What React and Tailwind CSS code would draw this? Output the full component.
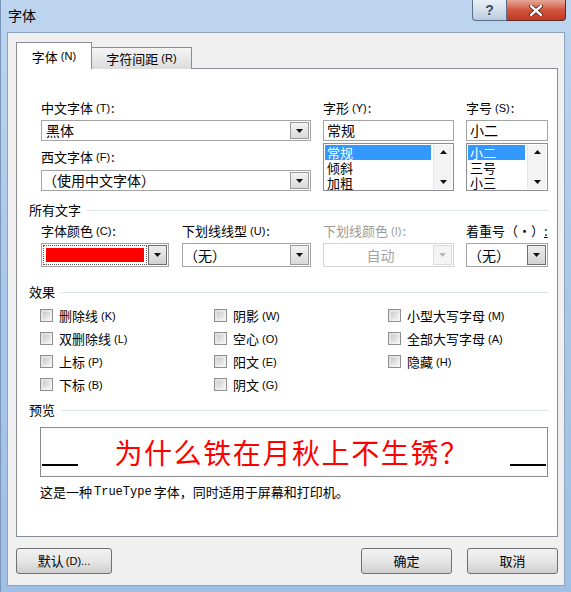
import React from "react";

const Tri = ({ up = false, disabled = false }) => (
    <svg width="7" height="4" viewBox="0 0 7 4">
        <path d={up ? "M0 4 L3.5 0 L7 4 Z" : "M0 0 L7 0 L3.5 4 Z"} fill={disabled ? "#b8b8b8" : "#111"} />
    </svg>
);

const DropBtn = ({ disabled = false, dark = false }) => (
    <div
        className={
            "w-[19px] flex items-center justify-center border " +
            (disabled
                ? "border-[#dcdcdc] bg-[#f4f4f4]"
                : dark
                ? "border-[#6e6e6e] bg-gradient-to-b from-[#ededed] to-[#d2d2d2]"
                : "border-[#9a9a9a] bg-gradient-to-b from-[#f3f3f3] to-[#d9d9d9]")
        }
    >
        <Tri disabled={disabled} />
    </div>
);

const Select = ({ value, h = "h-[21px]", center = false, disabled = false, dark = false, pl = "pl-[3px]" }) => (
    <div
        className={
            "flex bg-white border p-[1px] " +
            h +
            (disabled ? " border-[#d4d4d4]" : " border-[#a5a5a5]")
        }
    >
        <div
            className={
                "flex-1 flex items-center text-[14px] leading-[15px] " +
                pl +
                (center ? " justify-center" : "") +
                (disabled ? " text-[#a3a3a3]" : " text-black")
            }
        >
            {value}
        </div>
        <DropBtn disabled={disabled} dark={dark} />
    </div>
);

const Label = ({ text, k, disabled = false }) => (
    <div
        className={
            "h-[18px] flex items-center text-[13px] leading-[14px] whitespace-nowrap " +
            (disabled ? "text-[#9a9a9a]" : "text-black")
        }
    >
        {text}
        {k && <span className="ml-[3px] text-[11px] font-['Liberation_Sans',sans-serif]">({k})</span>}
        <span className="ml-[1px]">:</span>
    </div>
);

const Section = ({ title }) => (
    <div className="h-[18px] flex items-center pl-[12px]">
        <span className="text-[13px] leading-[14px] text-black whitespace-nowrap">{title}</span>
        <div className="flex-1 ml-[6px] h-[1px] bg-[#dde4ea]" />
    </div>
);

// list items are packed tightly, as in the dialog
const ListBox = ({ items }) => (
    <div className="h-[48px] flex bg-white border border-[#8a8d94] p-[1px]">
        <div className="flex-1 flex flex-col">
            {items.map((it, i) => (
                <div
                    key={it}
                    className={
                        "h-[15px] flex items-center pl-[2px] text-[13px] leading-[15px] mr-[2px] " +
                        (i === 0 ? "bg-[#3399ff] text-white" : "text-black")
                    }
                >
                    {it}
                </div>
            ))}
        </div>
        <div className="w-[19px] flex flex-col justify-between items-center py-[5px] bg-[#f3f3f3] border-l border-[#e4e4e4]">
            <Tri up />
            <Tri />
        </div>
    </div>
);

const Check = ({ label, k }) => (
    <div className="h-[23px] flex items-center">
        <div className="w-[13px] h-[13px] border border-[#8e8f8f] bg-gradient-to-br from-[#dcdcdc] to-[#f8f8f8] p-[2px]">
            <div className="w-full h-full bg-gradient-to-br from-[#cbcbcb] to-[#f0f0f0]" />
        </div>
        <span className="ml-[6px] text-[13px] leading-[14px] text-black whitespace-nowrap">{label}</span>
        <span className="ml-[3px] text-[11px] leading-[14px] font-['Liberation_Sans',sans-serif] text-black">({k})</span>
    </div>
);

const Button = ({ children, w }) => (
    <div
        className={
            "h-[26px] flex items-center justify-center rounded-[3px] border border-[#707070] text-[13px] text-black bg-gradient-to-b from-[#f2f2f2] via-[#e6e6e6] to-[#cfcfcf] " +
            w
        }
    >
        {children}
    </div>
);

export default function App() {
    return (
        <div className="w-[571px] h-[592px] flex flex-col bg-gradient-to-b from-[#bdd5ee] via-[#a9c7e8] to-[#9fc0e4] border-l border-[#7895b8] font-['Noto_Sans_CJK_SC','Liberation_Sans',sans-serif] overflow-hidden">
            {/* title bar */}
            <div className="h-[32px] flex items-start">
                <div className="pl-[7px] pt-[8px] text-[14px] leading-[15px] text-black">字体</div>
                <div className="flex-1" />
                <div className="flex mr-[5px]">
                    <div className="w-[35px] h-[21px] flex items-center justify-center rounded-bl-[4px] border border-t-0 border-[#5b6f88] bg-gradient-to-b from-[#e9eff6] via-[#d3dfeb] to-[#b9cbdf] text-[14px] font-bold text-[#3a4a5e] font-['Liberation_Sans',sans-serif]">
                        ?
                    </div>
                    <div className="w-[59px] h-[21px] flex items-center justify-center rounded-br-[4px] border border-t-0 border-l-0 border-[#5b2a22] bg-gradient-to-b from-[#e6a898] via-[#d0553e] to-[#c2391f]">
                        <svg width="14" height="11" viewBox="0 0 14 11">
                            <path d="M2 1 L12 10 M12 1 L2 10" stroke="#3b1510" strokeWidth="4" strokeLinecap="round" />
                            <path d="M2 1 L12 10 M12 1 L2 10" stroke="#fff" strokeWidth="2.4" strokeLinecap="round" />
                        </svg>
                    </div>
                </div>
            </div>

            {/* client area */}
            <div className="ml-[6px] mr-[6px] h-[554px] flex flex-col bg-[#f0f0f0] border border-[#8fa5bf] pl-[8px] pr-[6px] pt-[9px]">
                {/* tabs */}
                <div className="flex items-end h-[27px] relative z-10">
                    <div className="w-[76px] h-[27px] flex items-center justify-center bg-white border border-b-0 border-[#898c95] text-[13px] text-black pt-[1px]">
                        字体<span className="ml-[3px] text-[11px] font-['Liberation_Sans',sans-serif]">(N)</span>
                    </div>
                    <div className="w-[100px] h-[22px] flex items-center justify-center bg-gradient-to-b from-[#f4f4f4] to-[#dcdcdc] border border-l-0 border-b-0 border-[#898c95] text-[13px] text-black">
                        字符间距<span className="ml-[3px] text-[11px] font-['Liberation_Sans',sans-serif]">(R)</span>
                    </div>
                </div>

                {/* panel */}
                <div className="-mt-[1px] h-[469px] bg-white border border-[#898c95] flex flex-col pr-[9px] pt-[30px]">
                    <div className="flex pl-[24px]">
                        <div className="w-[270px] flex flex-col">
                            <Label text="中文字体" k="T" />
                            <div className="mt-[3px]">
                                <Select value="黑体" />
                            </div>
                            <div className="mt-[7px]">
                                <Label text="西文字体" k="F" />
                            </div>
                            <div className="mt-[4px]">
                                <Select value="（使用中文字体）" pl="pl-[0px]" />
                            </div>
                        </div>
                        <div className="w-[131px] ml-[12px] flex flex-col">
                            <Label text="字形" k="Y" />
                            <div className="mt-[3px] h-[21px] border border-[#a5a5a5] bg-white flex items-center pl-[3px] text-[14px] leading-[15px] text-black">
                                常规
                            </div>
                            <div className="mt-[2px]">
                                <ListBox items={["常规", "倾斜", "加粗"]} />
                            </div>
                        </div>
                        <div className="w-[82px] ml-[12px] flex flex-col">
                            <Label text="字号" k="S" />
                            <div className="mt-[3px] h-[21px] border border-[#a5a5a5] bg-white flex items-center pl-[3px] text-[14px] leading-[15px] text-black">
                                小二
                            </div>
                            <div className="mt-[2px]">
                                <ListBox items={["小二", "三号", "小三"]} />
                            </div>
                        </div>
                    </div>

                    <div className="mt-[10px]">
                        <Section title="所有文字" />
                    </div>
                    <div className="flex pl-[24px] mt-[3px]">
                        <div className="w-[128px] flex flex-col">
                            <Label text="字体颜色" k="C" />
                            <div className="mt-[3px] h-[24px] flex bg-white border border-[#a5a5a5] p-[1px]">
                                <div className="flex-1 border border-dotted border-[#555] p-[2px] mr-[1px]">
                                    <div className="w-full h-full bg-[#ff0000]" />
                                </div>
                                <DropBtn dark />
                            </div>
                        </div>
                        <div className="w-[129px] ml-[13px] flex flex-col">
                            <Label text="下划线线型" k="U" />
                            <div className="mt-[3px]">
                                <Select value="（无）" h="h-[24px]" pl="pl-[0px]" />
                            </div>
                        </div>
                        <div className="w-[131px] ml-[12px] flex flex-col">
                            <Label text="下划线颜色" k="I" disabled />
                            <div className="mt-[3px]">
                                <Select value="自动" h="h-[24px]" center disabled />
                            </div>
                        </div>
                        <div className="w-[82px] ml-[12px] flex flex-col">
                            <div className="h-[18px] flex items-center text-[13px] leading-[14px] text-black whitespace-nowrap">
                                着重号（·）<span className="underline">:</span>
                            </div>
                            <div className="mt-[3px]">
                                <Select value="（无）" h="h-[24px]" pl="pl-[0px]" dark />
                            </div>
                        </div>
                    </div>

                    <div className="mt-[16px]">
                        <Section title="效果" />
                    </div>
                    <div className="mt-[3px] pl-[23px] grid grid-cols-[174px_174px_174px]">
                        <Check label="删除线" k="K" />
                        <Check label="阴影" k="W" />
                        <Check label="小型大写字母" k="M" />
                        <Check label="双删除线" k="L" />
                        <Check label="空心" k="O" />
                        <Check label="全部大写字母" k="A" />
                        <Check label="上标" k="P" />
                        <Check label="阳文" k="E" />
                        <Check label="隐藏" k="H" />
                        <Check label="下标" k="B" />
                        <Check label="阴文" k="G" />
                    </div>

                    <div className="mt-[5px]">
                        <Section title="预览" />
                    </div>
                    <div className="mt-[8px] ml-[23px] h-[50px] border border-[#8a8a8a] bg-white flex items-end">
                        <div className="w-[36px] h-[2px] bg-black mb-[10px] ml-[1px]" />
                        <div className="flex-1 self-center text-center text-[28px] leading-[30px] text-[#ff0000] tracking-[1.6px] pr-[4px]">
                            为什么铁在月秋上不生锈？
                        </div>
                        <div className="w-[36px] h-[2px] bg-black mb-[10px] mr-[1px]" />
                    </div>
                    <div className="mt-[7px] ml-[23px] h-[16px] flex items-center text-[13px] leading-[14px] text-black whitespace-nowrap">
                        这是一种 <span className="font-['Liberation_Mono',monospace] text-[12px] mx-[2px]">TrueType</span> 字体，同时适用于屏幕和打印机。
                    </div>
                </div>

                {/* bottom buttons */}
                <div className="mt-[11px] flex">
                    <Button w="w-[96px]">
                        默认<span className="ml-[2px] text-[11px] font-['Liberation_Sans',sans-serif]">(D)...</span>
                    </Button>
                    <div className="flex-1" />
                    <Button w="w-[91px]">确定</Button>
                    <div className="w-[15px]" />
                    <Button w="w-[91px]">取消</Button>
                </div>
            </div>
        </div>
    );
}
